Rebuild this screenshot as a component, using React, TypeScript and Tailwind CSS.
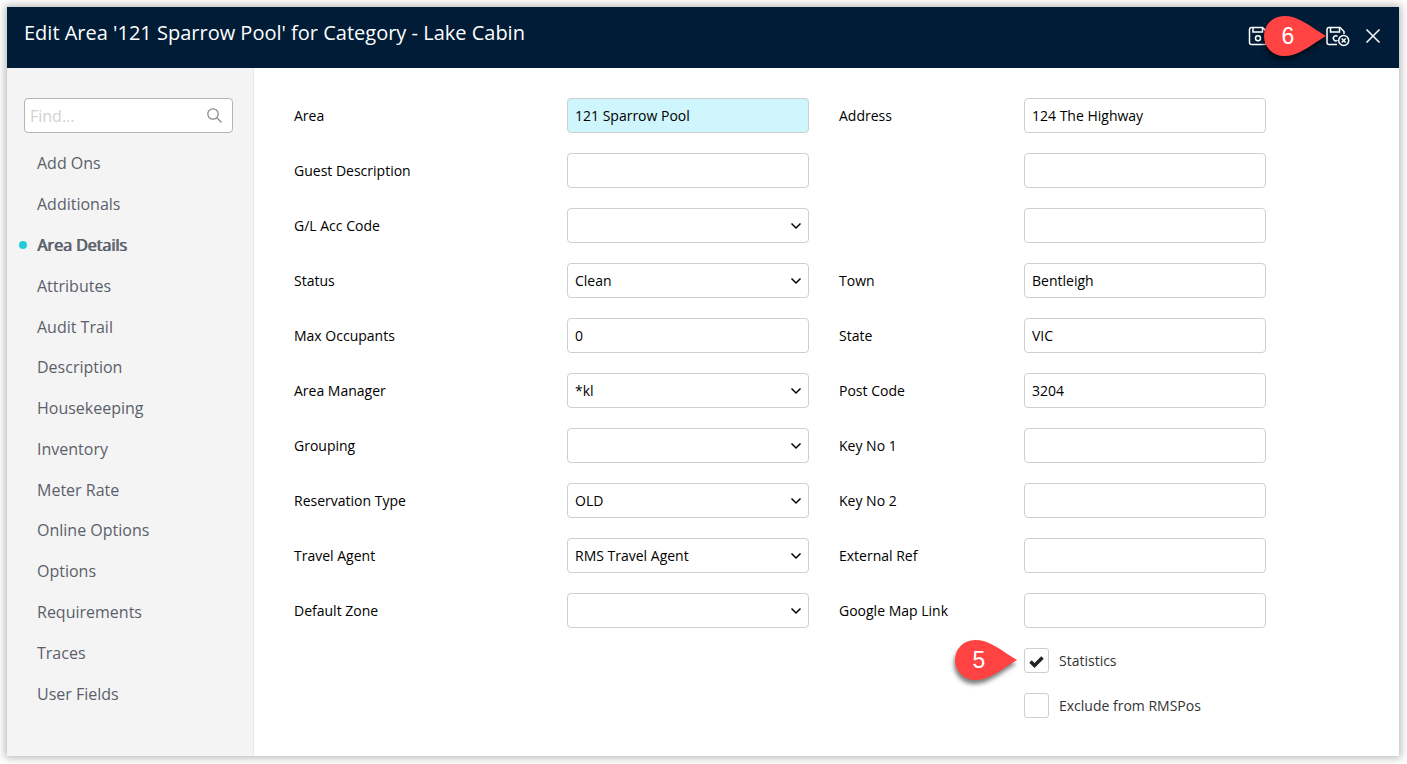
import { useState, type ReactNode } from "react";

const NAV_ITEMS = [
  "Add Ons",
  "Additionals",
  "Area Details",
  "Attributes",
  "Audit Trail",
  "Description",
  "Housekeeping",
  "Inventory",
  "Meter Rate",
  "Online Options",
  "Options",
  "Requirements",
  "Traces",
  "User Fields",
];

interface Field {
  id: string;
  label: string;
  value: string;
  type?: "text" | "select";
  highlight?: boolean;
}

const AREA_FIELDS: Field[] = [
  { id: "area", label: "Area", value: "121 Sparrow Pool", highlight: true },
  { id: "guest-description", label: "Guest Description", value: "" },
  { id: "gl-acc-code", label: "G/L Acc Code", value: "", type: "select" },
  { id: "status", label: "Status", value: "Clean", type: "select" },
  { id: "max-occupants", label: "Max Occupants", value: "0" },
  { id: "area-manager", label: "Area Manager", value: "*kl", type: "select" },
  { id: "grouping", label: "Grouping", value: "", type: "select" },
  { id: "reservation-type", label: "Reservation Type", value: "OLD", type: "select" },
  { id: "travel-agent", label: "Travel Agent", value: "RMS Travel Agent", type: "select" },
  { id: "default-zone", label: "Default Zone", value: "", type: "select" },
];

const ADDRESS_FIELDS: Field[] = [
  { id: "address-1", label: "Address", value: "124 The Highway" },
  { id: "address-2", label: "", value: "" },
  { id: "address-3", label: "", value: "" },
  { id: "town", label: "Town", value: "Bentleigh" },
  { id: "state", label: "State", value: "VIC" },
  { id: "post-code", label: "Post Code", value: "3204" },
  { id: "key-1", label: "Key No 1", value: "" },
  { id: "key-2", label: "Key No 2", value: "" },
  { id: "external-ref", label: "External Ref", value: "" },
  { id: "map-link", label: "Google Map Link", value: "" },
];

function SaveIcon() {
  return (
    <svg width="24" height="24" viewBox="0 0 24 24" fill="none" stroke="white" strokeWidth="1.5">
      <path d="M3.5 3.5h11l4 4v11a2 2 0 0 1-2 2h-13a2 2 0 0 1-2-2v-13a2 2 0 0 1 2-2z" />
      <path d="M5 3.5v4.5h9.5V3.5" />
      <circle cx="10" cy="14.2" r="2.5" />
    </svg>
  );
}

function SaveCloseIcon() {
  return (
    <svg width="24" height="24" viewBox="0 0 24 24" fill="none" stroke="white" strokeWidth="1.5">
      <path d="M11 20.5H3a2 2 0 0 1-2-2v-13a2 2 0 0 1 2-2h11l4 4v2.5" />
      <path d="M4.5 3.5v4.5h9V3.5" />
      <path d="M11.5 12.4a2.5 2.5 0 1 0 0 3.8" />
      <circle cx="17.7" cy="16.5" r="5" />
      <path d="M15.7 14.5l4 4M19.7 14.5l-4 4" />
    </svg>
  );
}

function Callout({ children }: { children: ReactNode }) {
  return (
    <span className="pointer-events-none block h-10 w-[62px] font-['Liberation_Sans',sans-serif] text-[23px] leading-10 text-white">
      <svg
        className="absolute inset-0 overflow-visible drop-shadow-[-1px_4px_2px_rgba(0,0,0,0.5)]"
        width="62"
        height="40"
        viewBox="0 0 62 40"
      >
        <path d="M62 20C52 14 44 8 37 4.5C32 2 27 0 20 0A20 20 0 0 0 20 40C27 40 32 38 37 35.5C44 32 52 26 62 20z" fill="#ff4343" />
      </svg>
      <span className="relative block w-12 text-center">{children}</span>
    </span>
  );
}

function FieldRow({ field, labelClass }: { field: Field; labelClass: string }) {
  const box = "h-[35px] w-[242px] rounded border border-[#cfcfcf] px-[7px] text-sm text-black outline-none";

  return (
    <div className="flex items-center">
      <label htmlFor={field.id} className={`${labelClass} shrink-0 text-sm text-black`}>
        {field.label}
      </label>
      {field.type === "select" ? (
        <div className="relative">
          <select id={field.id} defaultValue={field.value} className={`${box} appearance-none bg-white`}>
            <option value={field.value}>{field.value}</option>
          </select>
          <svg
            className="pointer-events-none absolute top-[14px] right-[7px]"
            width="12"
            height="8"
            viewBox="0 0 12 8"
            fill="none"
            stroke="black"
            strokeWidth="1.5"
          >
            <path d="M1.5 1.5L6 6l4.5-4.5" />
          </svg>
        </div>
      ) : (
        <input
          id={field.id}
          type="text"
          defaultValue={field.value}
          aria-label={field.label || "Address line"}
          className={`${box} ${field.highlight ? "bg-[#cff6fc]" : "bg-white"}`}
        />
      )}
    </div>
  );
}

function CheckRow({ id, label, checked }: { id: string; label: string; checked: boolean }) {
  const [on, setOn] = useState(checked);

  return (
    <div className="flex h-[25px] items-center gap-[10px]">
      <span className="relative block size-[25px]">
        <input
          id={id}
          type="checkbox"
          checked={on}
          onChange={(e) => setOn(e.target.checked)}
          className="block size-[25px] appearance-none rounded-[3px] border border-[#cfcfcf] bg-white"
        />
        {on && (
          <svg className="pointer-events-none absolute inset-0" width="25" height="25" viewBox="0 0 25 25" fill="none">
            <path d="M6.5 13.5l4 4 8-8" stroke="#212529" strokeWidth="3.5" />
          </svg>
        )}
      </span>
      <label htmlFor={id} className="text-sm text-[#333]">
        {label}
      </label>
    </div>
  );
}

export default function App() {
  const [active, setActive] = useState("Area Details");

  return (
    <div className="flex min-h-screen bg-white pt-[7px] pr-2 pb-2 pl-[7px] font-['Open_Sans',sans-serif]">
      <div className="flex flex-1 flex-col bg-white shadow-[0_0_8px_2px_rgba(0,0,0,0.28)]">
        <header className="flex h-[61px] items-center justify-between bg-[#001c36] pr-[18px] pb-1 pl-[17px]">
          <h1 className="pb-[6px] text-xl text-white">Edit Area '121 Sparrow Pool' for Category - Lake Cabin</h1>
          <div className="flex items-center">
            <button type="button" aria-label="Save" className="mr-[54px]">
              <SaveIcon />
            </button>
            <div className="relative mr-[15px] flex">
              <button type="button" aria-label="Save and close">
                <SaveCloseIcon />
              </button>
              <div className="absolute -top-2 right-full">
                <Callout>6</Callout>
              </div>
            </div>
            <button type="button" aria-label="Close">
              <svg width="16" height="16" viewBox="0 0 16 16" fill="none" stroke="white" strokeWidth="1.5">
                <path d="M1.5 1.5l13 13M14.5 1.5l-13 13" />
              </svg>
            </button>
          </div>
        </header>

        <div className="flex flex-1">
          {/* Sidebar */}
          <aside className="w-[247px] shrink-0 border-r border-[#e8e8e8] bg-[#f4f4f4] pt-[30px]">
            <div className="relative mr-5 ml-[17px]">
              <input
                type="text"
                aria-label="Find"
                placeholder="Find..."
                className="block h-[35px] w-full rounded border border-[#b4b4b4] bg-white pr-9 pl-[5px] text-base outline-none placeholder:text-[#d2d2d2]"
              />
              <svg
                className="absolute top-[10px] right-[11px]"
                width="15"
                height="15"
                viewBox="0 0 15 15"
                fill="none"
                stroke="#8c8c8c"
                strokeWidth="1.3"
              >
                <circle cx="6" cy="6" r="5.2" />
                <path d="M9.8 9.8l4.7 4.7" />
              </svg>
            </div>
            <nav className="mt-[10px] flex h-[571px] flex-col">
              {NAV_ITEMS.map((item) => (
                <button
                  key={item}
                  type="button"
                  onClick={() => setActive(item)}
                  className={`flex flex-1 items-center pl-3 text-left text-base text-[#5b5f6b] ${item === active ? "[text-shadow:1px_0_0_currentColor]" : ""}`}
                >
                  <span className={`mr-[10px] size-2 rounded-full ${item === active ? "bg-[#1fccd9]" : ""}`} />
                  {item}
                </button>
              ))}
            </nav>
          </aside>

          {/* Form */}
          <form className="flex flex-1 flex-wrap content-start gap-x-[30px] gap-y-5 pt-[30px] pb-[38px] pl-10">
            <div className="flex flex-col gap-5">
              {AREA_FIELDS.map((f) => (
                <FieldRow key={f.id} field={f} labelClass="w-[273px]" />
              ))}
            </div>
            <div className="flex flex-col gap-5">
              {ADDRESS_FIELDS.map((f) => (
                <FieldRow key={f.id} field={f} labelClass="w-[185px]" />
              ))}
              <div className="relative ml-[185px] flex flex-col gap-5">
                <CheckRow id="statistics" label="Statistics" checked />
                <CheckRow id="exclude-rmspos" label="Exclude from RMSPos" checked={false} />
                <div className="absolute -top-2 right-full mr-[7px]">
                  <Callout>5</Callout>
                </div>
              </div>
            </div>
          </form>
        </div>
      </div>
    </div>
  );
}
